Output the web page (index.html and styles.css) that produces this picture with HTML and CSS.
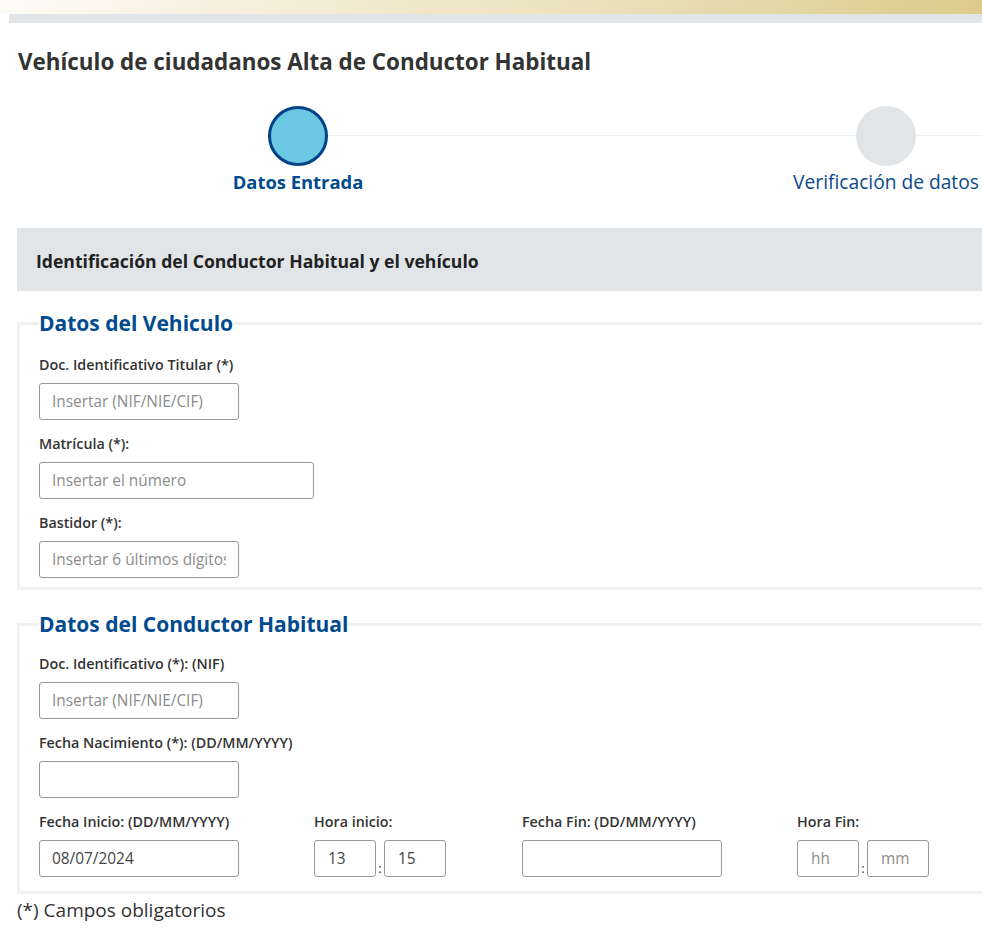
FILE: index.html
```html
<!DOCTYPE html>
<html lang="es">
<head>
<meta charset="utf-8">
<title>Alta de Conductor Habitual</title>
<link rel="stylesheet" href="styles.css">
</head>
<body>
<div class="topbar"></div>
<div class="subbar"></div>
<main class="page">
  <h1 class="title">Vehículo de ciudadanos Alta de Conductor Habitual</h1>

  <ol class="stepper">
    <li class="step step-active">
      <span class="step-dot"></span>
      <span class="step-label">Datos Entrada</span>
    </li>
    <li class="step">
      <span class="step-dot"></span>
      <span class="step-label">Verificación de datos</span>
    </li>
  </ol>

  <div class="section-head">Identificación del Conductor Habitual y el vehículo</div>

  <fieldset class="group group-first">
    <legend class="group-title">Datos del Vehiculo</legend>
    <div class="field">
      <label class="field-label" for="doc">Doc. Identificativo Titular (*)</label>
      <input class="input input-s" id="doc" type="text" placeholder="Insertar (NIF/NIE/CIF)">
    </div>
    <div class="field">
      <label class="field-label" for="mat">Matrícula (*):</label>
      <input class="input input-m" id="mat" type="text" placeholder="Insertar el número">
    </div>
    <div class="field">
      <label class="field-label" for="bas">Bastidor (*):</label>
      <input class="input input-s" id="bas" type="text" placeholder="Insertar 6 últimos dígitos">
    </div>
  </fieldset>

  <fieldset class="group group-second">
    <legend class="group-title">Datos del Conductor Habitual</legend>
    <div class="field">
      <label class="field-label" for="doc2">Doc. Identificativo (*): (NIF)</label>
      <input class="input input-s" id="doc2" type="text" placeholder="Insertar (NIF/NIE/CIF)">
    </div>
    <div class="field">
      <label class="field-label" for="nac">Fecha Nacimiento (*): (DD/MM/YYYY)</label>
      <input class="input input-s" id="nac" type="text">
    </div>
    <div class="field-row">
      <div class="field">
        <label class="field-label" for="fini">Fecha Inicio: (DD/MM/YYYY)</label>
        <input class="input input-s" id="fini" type="text" value="08/07/2024">
      </div>
      <div class="field">
        <label class="field-label" for="hini">Hora inicio:</label>
        <div class="time">
          <input class="input input-t" id="hini" type="text" value="13">
          <span class="time-sep">:</span>
          <input class="input input-t" type="text" value="15">
        </div>
      </div>
      <div class="field">
        <label class="field-label" for="ffin">Fecha Fin: (DD/MM/YYYY)</label>
        <input class="input input-s" id="ffin" type="text">
      </div>
      <div class="field">
        <label class="field-label" for="hfin">Hora Fin:</label>
        <div class="time">
          <input class="input input-t" id="hfin" type="text" placeholder="hh">
          <span class="time-sep">:</span>
          <input class="input input-t" type="text" placeholder="mm">
        </div>
      </div>
    </div>
  </fieldset>

  <p class="note">(*) Campos obligatorios</p>
</main>
</body>
</html>
```

FILE: styles.css
```css
html, body {
  margin: 0;
  padding: 0;
  overflow: hidden;
  background: #ffffff;
}
body {
  font-family: "Open Sans", "Noto Sans", "Liberation Sans", sans-serif;
  color: #333333;
  width: 982px;
}
.topbar {
  height: 14px;
  background: linear-gradient(90deg, #fefcf7 0%, #f4ecd6 30%, #ebe1bc 60%, #dccb8c 100%);
}
.subbar {
  height: 9px;
  margin-left: 9px;
  background: #e1e5e8;
}
.page {
  margin-left: 17px;
  width: 1200px;
}
.title {
  margin: 23px 0 0 1px;
  font-size: 22.4px;
  line-height: 32px;
  font-weight: 700;
  color: #333333;
}
.stepper {
  list-style: none;
  margin: 28px 0 0 -13px;
  padding: 0;
  display: flex;
}
.step {
  position: relative;
  width: 588px;
  flex: none;
  display: flex;
  flex-direction: column;
  align-items: center;
}
.step::after {
  content: "";
  position: absolute;
  left: 50%;
  width: 100%;
  top: 29px;
  height: 1px;
  background: #f0f0f0;
  z-index: 0;
}
.step-dot {
  position: relative;
  z-index: 1;
  box-sizing: border-box;
  width: 60px;
  height: 60px;
  border-radius: 50%;
  background: #e1e5e8;
}
.step-active .step-dot {
  background: #6bc7e4;
  border: 3px solid #004487;
}
.step-label {
  margin-top: 3px;
  font-size: 19.2px;
  line-height: 26px;
  color: #0b4a8b;
  white-space: nowrap;
}
.step-active .step-label {
  font-size: 18.4px;
  font-weight: 700;
  color: #004a8f;
}
.section-head {
  margin-top: 33px;
  height: 63px;
  box-sizing: border-box;
  padding: 21px 0 0 19px;
  background: #e1e5e8;
  font-size: 17.6px;
  line-height: 24px;
  font-weight: 700;
  color: #222222;
}
.group {
  margin: 17px 0 0 0;
  border: 3px solid #f1f1f1;
  padding: 16px 19px 9px 19px;
  min-width: 0;
}
.group-second {
  margin-top: 19px;
  padding-top: 14px;
  padding-bottom: 14px;
}
.group-title {
  padding: 0;
  font-size: 21px;
  line-height: 30px;
  font-weight: 700;
  color: #004a8f;
}
.field {
  display: flex;
  flex-direction: column;
  align-items: flex-start;
}
.field + .field {
  margin-top: 13px;
}
.field-label {
  font-size: 14.3px;
  line-height: 22px;
  font-weight: 600;
  color: #333333;
  margin-bottom: 7px;
}
.input {
  box-sizing: border-box;
  height: 37px;
  border: 1px solid #979797;
  border-radius: 3px;
  padding: 0 12px;
  font-family: inherit;
  font-size: 15.4px;
  color: #444444;
  background: #ffffff;
  outline: none;
}
.input::placeholder {
  color: #8c8c8c;
}
.input-s { width: 200px; }
.input-m { width: 275px; }
.input-t { width: 62px; padding: 0 13px; }
.field-row {
  margin-top: 13px;
  display: grid;
  grid-template-columns: 275px 208px 275px auto;
}
.field-row .field + .field {
  margin-top: 0;
}
.time {
  display: flex;
  align-items: flex-end;
}
.time-sep {
  width: 8px;
  text-align: center;
  font-size: 13px;
  line-height: 18px;
  color: #333333;
}
.note {
  margin: 3px 0 0 0;
  font-size: 19px;
  line-height: 26px;
  color: #333333;
}
```
